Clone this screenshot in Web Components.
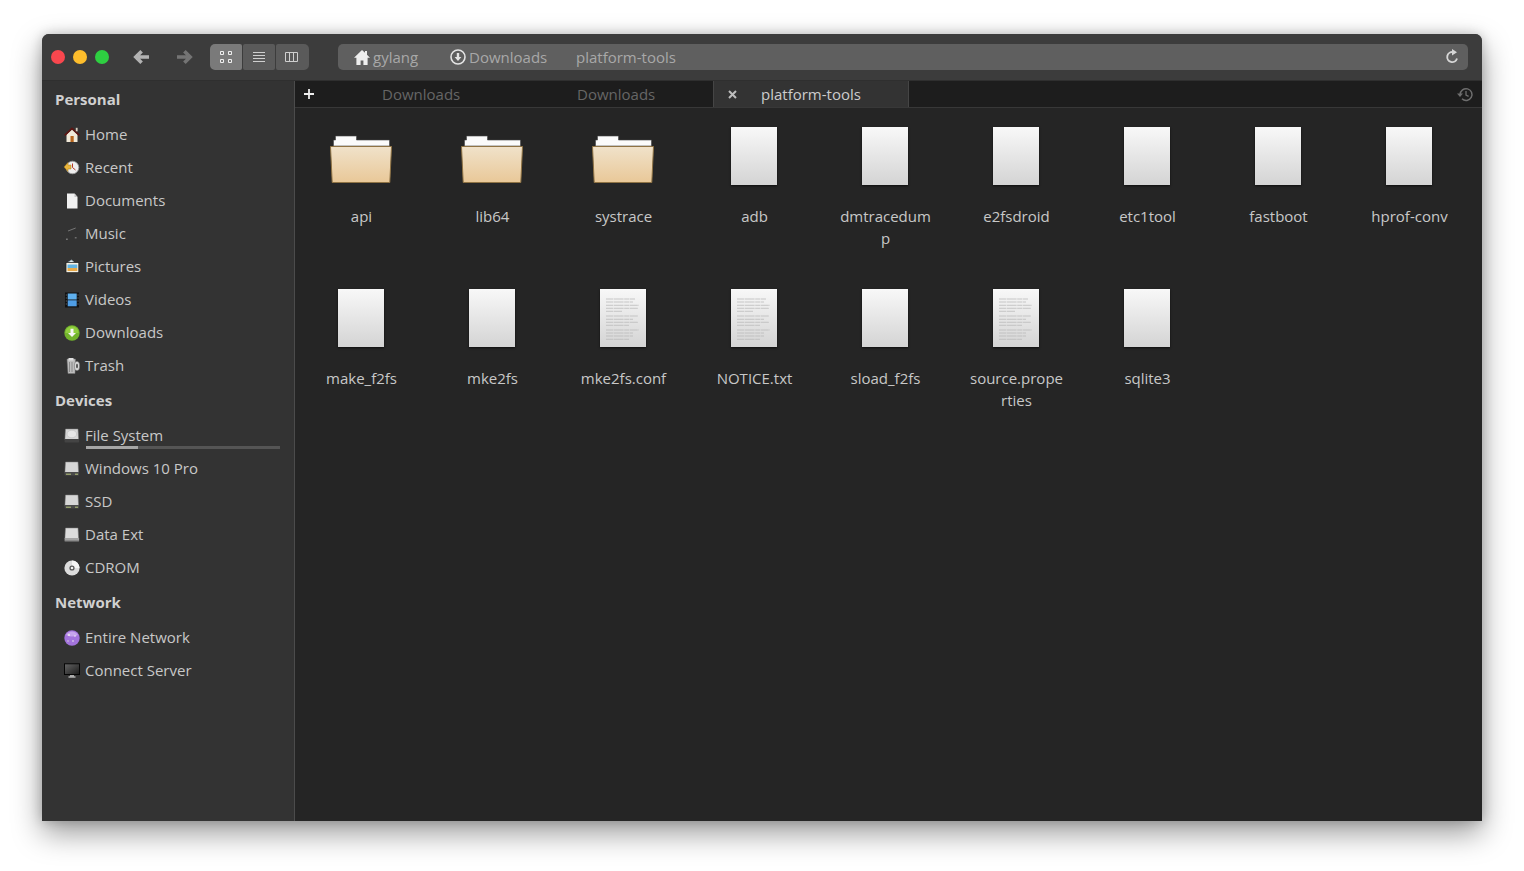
<!DOCTYPE html>
<html lang="en"><head><meta charset="utf-8"><title>Files</title>
<style>
html,body{margin:0;height:100%;background:#fff}
body{padding:34px 42px 50px;box-sizing:border-box;font-family:"Open Sans","Noto Sans",sans-serif;overflow:hidden}
</style></head><body>
<x-window>
  <x-toolbar slot="toolbar"></x-toolbar>
  <x-sidebar slot="sidebar">
    <x-side-head>Personal</x-side-head>
    <x-side-item icon="home">Home</x-side-item>
    <x-side-item icon="recent">Recent</x-side-item>
    <x-side-item icon="doc">Documents</x-side-item>
    <x-side-item icon="music">Music</x-side-item>
    <x-side-item icon="pictures">Pictures</x-side-item>
    <x-side-item icon="videos">Videos</x-side-item>
    <x-side-item icon="downloads">Downloads</x-side-item>
    <x-side-item icon="trash">Trash</x-side-item>
    <x-side-head>Devices</x-side-head>
    <x-side-item icon="fs" usage="27">File System</x-side-item>
    <x-side-item icon="disk">Windows 10 Pro</x-side-item>
    <x-side-item icon="disk">SSD</x-side-item>
    <x-side-item icon="ext">Data Ext</x-side-item>
    <x-side-item icon="cd">CDROM</x-side-item>
    <x-side-head>Network</x-side-head>
    <x-side-item icon="net">Entire Network</x-side-item>
    <x-side-item icon="server">Connect Server</x-side-item>
  </x-sidebar>
  <x-tabs slot="tabs"></x-tabs>
  <x-grid slot="main">
    <x-file type="folder">api</x-file>
    <x-file type="folder">lib64</x-file>
    <x-file type="folder">systrace</x-file>
    <x-file type="blank">adb</x-file>
    <x-file type="blank">dmtracedump</x-file>
    <x-file type="blank">e2fsdroid</x-file>
    <x-file type="blank">etc1tool</x-file>
    <x-file type="blank">fastboot</x-file>
    <x-file type="blank">hprof-conv</x-file>
    <x-file type="blank">make_f2fs</x-file>
    <x-file type="blank">mke2fs</x-file>
    <x-file type="text">mke2fs.conf</x-file>
    <x-file type="text">NOTICE.txt</x-file>
    <x-file type="blank">sload_f2fs</x-file>
    <x-file type="text">source.properties</x-file>
    <x-file type="blank">sqlite3</x-file>
  </x-grid>
</x-window>
<script>
const svg=(w,h,b,vb)=>`<svg width="${w}" height="${h}" viewBox="${vb||`0 0 ${w} ${h}`}" xmlns="http://www.w3.org/2000/svg" style="display:block;overflow:visible">${b}</svg>`;
const hd=(top,bot)=>`<path d="M1.500 1h12.500l.6 10.500H.9z" fill="${top}" stroke="#7c7c7c" stroke-width=".5"/><rect x=".6" y="11" width="14.500" height="3.400" rx=".6" fill="${bot}"/>`;
const SIDE={
home:svg(16,16,`<path d="M2.500 7.500v7.500h11V7.500L8 2.500z" fill="#f2ead9"/><path d="M.7 8.300 8 1.500l7.300 6.800" fill="none" stroke="#5c1512" stroke-width="1.700"/><rect x="11.800" y=".8" width="1.800" height="3.500" fill="#d8cfc0"/><rect x="6.500" y="9" width="3.200" height="6" fill="#b8651d"/>`),
recent:svg(16,16,`<circle cx="8.500" cy="7.500" r="6.300" fill="#efefef" stroke="#9a9a9a" stroke-width=".8"/><path d="M8.500 3.500v4l3 2.500" fill="none" stroke="#b53a2c"/><path d="M0 7l4-4.500V5h3v4H4v2.500z" fill="#eab53c" stroke="#a57a1c" stroke-width=".5"/>`),
doc:svg(16,16,`<path d="M3 .5h7.500l3 3.500v11.500H3z" fill="#f1f1f1"/><path d="M10.500.5V4h3z" fill="#c4c4c4"/>`),
music:svg(16,16,`<rect x="2" y="12.500" width="1.800" height="1.500" fill="#777"/><rect x="10.800" y="11" width="1.800" height="1.500" fill="#6e6e6e"/><path d="M4 5 11.700 2" stroke="#777" stroke-width="1"/>`),
pictures:svg(16,16,`<path d="M3 4 7.500 1l3.500 3" fill="#dfe8ee" stroke="#9eb4c0" stroke-width=".7"/><rect x="2" y="3.500" width="12.800" height="10.200" fill="#f5f1e4" stroke="#222" stroke-width=".8"/><rect x="3.500" y="5.500" width="9.800" height="3.500" fill="#62b4e3"/><rect x="3.500" y="9" width="9.800" height="3" fill="#e8a948"/>`),
videos:svg(16,16,`<rect x="1" y=".5" width="14" height="15" fill="#111"/><rect x="3.700" y="1.500" width="9" height="6" fill="#5fb0ee"/><rect x="3.700" y="8.300" width="9" height="6" fill="#4f9ee6"/><path d="M2.300 2.500v1M2.300 5.500v1M2.300 8.500v1M2.300 11.500v1M14 2.500v1M14 5.500v1M14 8.500v1M14 11.500v1" stroke="#777"/>`),
downloads:svg(16,16,`<circle cx="8" cy="8" r="7.700" fill="#72b32c"/><path d="M1.300 8a6.700 6.700 0 0 1 13.400 0z" fill="#8fce3e"/><path d="M6.500 3.800h3V8h2.500L8 12 4 8h2.500z" fill="#f6f6f6"/>`),
trash:svg(16,16,`<path d="M3 1h8.500l-.5 14.500H4z" fill="#bdbdbd" stroke="#777" stroke-width=".5"/><path d="M4.500 0h5v2.500h-5z" fill="#e0e0e0"/><ellipse cx="13" cy="8" rx="2.600" ry="4.600" fill="#d6d6d6" stroke="#777" stroke-width=".6"/><ellipse cx="13" cy="8" rx="1" ry="2.200" fill="#555"/><path d="M5.500 4v10M8 4v10" stroke="#8a8a8a"/>`),
fs:svg(16,16,hd('#d6d6d6','#444')+`<ellipse cx="7.800" cy="6" rx="4.800" ry="3.800" fill="#e6e6e6" stroke="#bdbdbd" stroke-width=".6"/>`),
disk:svg(16,16,hd('#d6d6d6','#4a4a4a')+`<rect x="2" y="12.700" width="5" height="1" fill="#b4c27a"/><rect x="11" y="12.700" width="3" height="1" fill="#b4c27a"/>`),
ext:svg(16,16,hd('#dcdcdc','#a3a3a3')+`<rect x=".6" y="13.700" width="14.500" height=".8" fill="#555"/>`),
cd:svg(16,16,`<circle cx="8" cy="8" r="7.600" fill="#dcdcdc"/><path d="M8 .4A7.600 7.600 0 0 1 15.600 8H8z" fill="#f4f4f4"/><circle cx="8" cy="8" r="2.600" fill="#555"/><circle cx="8" cy="8" r="1.300" fill="#f2f2f2"/>`),
net:svg(16,16,`<circle cx="8" cy="8" r="7.700" fill="#a374dc"/><path d="M2 5a7 7 0 0 1 12 0q-6 3-12 0z" fill="#c6a5ec"/><circle cx="5" cy="5" r="1" fill="#eee"/><circle cx="11" cy="6" r=".8" fill="#eee"/><circle cx="9" cy="11" r=".8" fill="#eee"/><circle cx="4" cy="11" r=".7" fill="#ddd"/>`),
server:svg(16,16,`<defs><linearGradient id="s" x1="0" y1="0" x2="1" y2="1"><stop offset="0" stop-color="#666"/><stop offset="1" stop-color="#1a1a1a"/></linearGradient></defs><rect x=".5" y=".8" width="15" height="10.700" fill="url(#s)" stroke="#050505"/><rect x="6" y="12" width="4" height="1.500" fill="#aaa"/><rect x="4.500" y="13.500" width="7" height="1" fill="#ededed"/>`)
};
const lines=()=>[[10,29],[13,27],[16.300,33],[19.300,32],[22.300,16],[27,32],[30.300,27],[33.300,32],[36.300,23],[41,33],[44,27],[47,27],[50.300,23]].map(([y,w])=>`<line x1="6" x2="${6+w}" y1="${y}" y2="${y}" stroke="#b6b6b6" stroke-width=".7" stroke-dasharray="7 .6 10 .6 5 .6 8 .6"/>`).join('');
const sheet=`<linearGradient id="g" x1="0" y1="0" x2="0" y2="1"><stop offset="0" stop-color="#f8f8f8"/><stop offset="1" stop-color="#d4d4d4"/></linearGradient>`;
const FILES={
blank:svg(46,58,`<defs>${sheet}</defs><rect width="46" height="58" fill="url(#g)"/>`),
text:svg(46,58,`<defs>${sheet}</defs><rect width="46" height="58" fill="url(#g)"/>${lines()}`),
folder:svg(62,48,`<defs><linearGradient id="f" x1="0" y1="0" x2="0" y2="1"><stop offset="0" stop-color="#f0e2ca"/><stop offset="1" stop-color="#e9c898"/></linearGradient></defs><path d="M3.500 11V5h2V1h21v4h33v6z" fill="#fbfbfb" stroke="#444" stroke-width=".6"/><path d="M.5 11.500h61L59.800 47.500H2.200z" fill="url(#f)" stroke="#8f7344" stroke-width="1"/>`)
};
function comp(name,html,setup){customElements.define(name,class extends HTMLElement{connectedCallback(){if(this.shadowRoot)return;const r=this.attachShadow({mode:'open'});r.innerHTML=typeof html==='function'?html(this):html;setup&&setup(r,this)}})}
comp('x-window',`<style>:host{display:grid;grid-template-columns:253px 1fr;grid-template-rows:47px 27px 1fr;width:1440px;height:787px;background:#333;border-radius:7px 7px 0 0;box-shadow:0 12px 30px rgba(0,0,0,.4),0 0 12px rgba(0,0,0,.2);overflow:hidden}
::slotted([slot=toolbar]){grid-column:1/3}::slotted([slot=sidebar]){grid-row:2/4}</style>
<slot name="toolbar"></slot><slot name="sidebar"></slot><slot name="tabs"></slot><slot name="main"></slot>`);
comp('x-toolbar',`<style>:host{display:flex;align-items:center;box-sizing:border-box;height:47px;padding:0 14px 1px 9px;background:#3c3c3c;border-bottom:1px solid #2f2f2f;font-size:15px;color:#a8a8a8}
.lights{display:flex;gap:8px}.lights i{width:14px;height:14px;border-radius:50%}
.nav{display:flex;gap:28px;margin-left:24px}
.seg{display:flex;gap:1px;margin-left:17px}.seg b{display:flex;align-items:center;justify-content:center;width:32px;height:26px;background:#5a5a5a;border-radius:2px}.seg b:first-child{background:#7a7a7a;border-radius:5px 2px 2px 5px}.seg b:last-child{box-sizing:border-box;width:33px;padding-right:2px;border-radius:2px 5px 5px 2px}
.path{flex:1;display:flex;align-items:center;height:26px;margin-left:29px;padding-left:16px;padding-right:9px;background:#5f5f5f;border-radius:5px}
.path span{display:flex;align-items:center;gap:3px;height:25px;padding-top:1px;white-space:nowrap}.path svg{flex:none}.spacer{flex:1}</style>
<div class="lights"><i style="background:#f9474e"></i><i style="background:#fdbd2c"></i><i style="background:#2ecf41"></i></div>
<div class="nav">${svg(16,16,`<path d="M8.600 2.200 2.800 8l5.800 5.800M3.500 8H16" fill="none" stroke="#b2b2b2" stroke-width="3.600"/>`)}${svg(16,16,`<path d="M7.400 2.200 13.200 8l-5.800 5.800M12.500 8H0" fill="none" stroke="#747474" stroke-width="3.600"/>`)}</div>
<div class="seg"><b>${svg(12,12,`<path d="M.5.5h3v3h-3zM8.500.5h3v3h-3zM.5 8.500h3v3h-3zM8.500 8.500h3v3h-3z" fill="none" stroke="#eee"/>`)}</b><b>${svg(12,10,`<path d="M0 .5h12M0 3.500h12M0 6.500h12M0 9.500h12" stroke="#cfcfcf"/>`)}</b><b>${svg(13,10,`<path d="M.5.500h12v9H.5zM4.500.5v9M8.500.5v9" fill="none" stroke="#cfcfcf"/>`)}</b></div>
<div class="path"><span style="width:96px">${svg(16,15,`<path d="M8 0 0 7.800h2.400V15h4.200v-4.500h2.800V15h4.200V7.800H16l-3-3V1h-2v1.800z" fill="#eee"/>`)}gylang</span>
<span style="width:126px">${svg(16,16,`<circle cx="8" cy="8" r="7" fill="none" stroke="#e4e4e4" stroke-width="1.600"/><path d="M6.800 4h2.400v4h2.200L8 12 4.600 8h2.200z" fill="#e4e4e4"/>`)}Downloads</span>
<span>platform-tools</span><span class="spacer"></span>${svg(14,15,`<path d="M12 9.500A5 5 0 1 1 8 3.100" fill="none" stroke="#d6d6d6" stroke-width="1.900"/><path d="M7 0l5 3.200L7 6.400z" fill="#d6d6d6"/>`)}</div>`);
comp('x-sidebar',`<style>:host{display:block;box-sizing:border-box;background:#333;border-right:1px solid #4c4c4c;color:#c8c8c8;font-size:15px}</style><slot></slot>`);
comp('x-side-head',`<style>:host{display:flex;align-items:center;box-sizing:border-box;height:37px;padding:0 0 1px 13px;font-weight:700;font-size:15px;color:#d0d0d0}</style><slot></slot>`);
comp('x-side-item',h=>{const u=h.getAttribute('usage');return `<style>:host{display:flex;align-items:center;position:relative;height:33px;padding-left:22px;gap:5px;white-space:nowrap}
span{padding-bottom:2px}
.bar{position:absolute;left:44px;width:194px;top:27px;height:3px;background:#555}.bar i{display:block;height:100%;background:#a6a6a6}</style>${SIDE[h.getAttribute('icon')]}<span><slot></slot></span>${u?`<div class="bar"><i style="width:${u}%"></i></div>`:''}`});
comp('x-tabs',`<style>:host{display:flex;align-items:center;box-sizing:border-box;height:27px;background:#1d1d1d;border-bottom:1px solid #383838;font-size:15px;color:#666}
.plus{width:87px;padding-left:8px;box-sizing:border-box;line-height:0}.t{width:195px}.t2{width:136px}
.a{display:flex;align-items:center;height:26px;width:196px;box-sizing:border-box;background:#333;border:solid #454545;border-width:0 1px;color:#ccc;padding-left:14px}.x{width:33px;line-height:0}
.h{margin-left:auto;margin-right:9px;line-height:0}</style>
<div class="plus">${svg(12,12,`<path d="M6 1v10M1 6h10" stroke="#eee" stroke-width="1.800"/>`)}</div><div class="t">Downloads</div><div class="t2">Downloads</div>
<div class="a"><span class="x">${svg(9,9,`<path d="M1 1l7 7M8 1l-7 7" stroke="#bdbdbd" stroke-width="2"/>`)}</span>platform-tools</div>
<div class="h">${svg(16,15,`<path d="M3.200 7.500A5.900 5.900 0 1 1 5 11.800" fill="none" stroke="#6e6e6e" stroke-width="1.500"/><path d="M0 6.600h6L3 10z" fill="#6e6e6e"/><path d="M9 4v4l2.600 1.400" fill="none" stroke="#6e6e6e" stroke-width="1.300"/>`)}</div>`);
comp('x-grid',`<style>:host{display:grid;grid-template-columns:repeat(9,131px);grid-auto-rows:162px;align-content:start;box-sizing:border-box;padding:19px 0 0;background:#252525;color:#c8c8c8;font-size:15px}</style><slot></slot>`);
comp('x-file',h=>`<style>:host{display:flex;flex-direction:column;align-items:center}
.i{height:58px;display:flex;align-items:flex-start;justify-content:center;margin-bottom:20px}.i.folder{padding-top:8px;height:50px}.i svg{box-shadow:${h.getAttribute('type')==='folder'?'none':'0 1px 2px rgba(0,0,0,.6)'}}
.l{width:96px;margin-left:2px;text-align:center;line-height:22px;word-break:break-all}</style><div class="i ${h.getAttribute('type')}">${FILES[h.getAttribute('type')]}</div><div class="l"><slot></slot></div>`);
</script>
</body></html>
